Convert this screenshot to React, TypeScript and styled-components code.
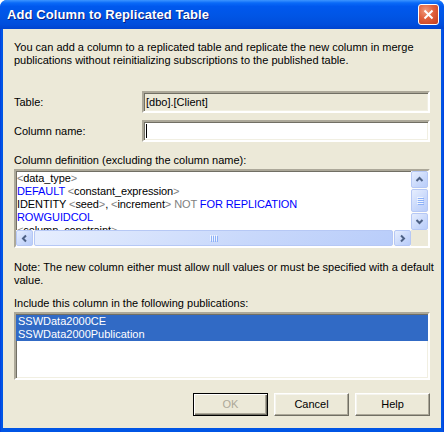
import React from "react";
import styled, { createGlobalStyle, css } from "styled-components";

const Global = createGlobalStyle`
  html, body { margin: 0; padding: 0; background: #ffffff; }
  body { font-family: "Liberation Sans", Arial, sans-serif; font-size: 11px; }
  * { box-sizing: border-box; }
`;

const Window = styled.div`
  width: 444px;
  height: 432px;
  display: flex;
  flex-direction: column;
  background: #0055e5;
  border-radius: 7px 7px 0 0;
  overflow: hidden;
`;

const TitleBar = styled.div`
  height: 29px;
  flex: none;
  display: flex;
  align-items: center;
  justify-content: space-between;
  padding: 0 5px 0 7px;
  background: linear-gradient(
    to bottom,
    #3d95ff 0%,
    #0a6af8 10%,
    #0058ee 22%,
    #0055e5 55%,
    #004ddc 85%,
    #0043cf 100%
  );
`;

const Title = styled.span`
  font-family: "Liberation Sans", Arial, sans-serif;
  font-weight: bold;
  font-size: 13px;
  color: #ffffff;
  text-shadow: 1px 1px 0 #0a1e7e;
  letter-spacing: 0.1px;
`;

const CloseButton = styled.div`
  width: 21px;
  height: 21px;
  border: 1px solid #ffffff;
  border-radius: 3px;
  background: radial-gradient(circle at 35% 30%, #f09a7c 0%, #e0603c 45%, #c23d1e 100%);
  display: flex;
  align-items: center;
  justify-content: center;
`;

const Frame = styled.div`
  flex: 1;
  display: flex;
  padding: 0 3px 4px 3px;
  background: linear-gradient(to right, #0831d9 0, #0055e5 1px, #0055e5 calc(100% - 1px), #0831d9 100%);
`;

const Body = styled.div`
  flex: 1;
  min-width: 0;
  background: #ece9d8;
  padding: 12px 11px 0 11px;
  display: flex;
  flex-direction: column;
  color: #000000;
  line-height: 13px;
`;

const Text = styled.div<{ $top?: number }>`
  margin-top: ${(p) => p.$top ?? 0}px;
  line-height: 13px;
  white-space: nowrap;
  min-width: 0;
`;

const FieldRow = styled.div<{ $top: number }>`
  margin-top: ${(p) => p.$top}px;
  display: grid;
  grid-template-columns: 128px 1fr;
  align-items: center;
`;

const sunken = css`
  border-style: solid;
  border-width: 2px;
  border-color: #aca899 #ffffff #ffffff #aca899;
  box-shadow: inset 1px 1px 0 #716f64, inset -1px -1px 0 #f1efe2;
`;

const Field = styled.div<{ $readOnly?: boolean }>`
  height: 22px;
  ${sunken};
  background: ${(p) => (p.$readOnly ? "#ece9d8" : "#ffffff")};
  padding: 0 0 0 2px;
  display: flex;
  align-items: center;
`;

const Caret = styled.span`
  width: 1px;
  height: 14px;
  background: #000000;
`;

const CodeBox = styled.div`
  margin-top: 2px;
  height: 79px;
  ${sunken};
  background: #ffffff;
  display: grid;
  grid-template-columns: minmax(0, 1fr) 17px;
  grid-template-rows: 1fr 16px;
`;

const CodeArea = styled.div`
  overflow: hidden;
  padding: 1px 0 0 1px;
  white-space: nowrap;
  line-height: 13px;
  letter-spacing: -0.1px;
`;

const Gray = styled.span`
  color: #808080;
`;
const Blue = styled.span`
  color: #0000ff;
`;

const VScroll = styled.div`
  display: flex;
  flex-direction: column;
  gap: 1px;
  background: #fdfdfa;
`;

const HScroll = styled.div`
  display: flex;
  flex-direction: row;
  gap: 1px;
  background: #fdfdfa;
`;

const Corner = styled.div`
  background: #ece9d8;
`;

const ScrollPart = styled.div<{ $size?: number; $grow?: boolean }>`
  ${(p) => (p.$grow ? "flex: 1;" : `flex: none; flex-basis: ${p.$size ?? 16}px;`)}
  border: 1px solid #b6c8f5;
  border-radius: 2px;
  background: linear-gradient(135deg, #e6eefe 0%, #c8d8fb 60%, #b9cdfa 100%);
  display: flex;
  align-items: center;
  justify-content: center;
`;

const Grip = styled.div<{ $vertical?: boolean }>`
  display: flex;
  flex-direction: ${(p) => (p.$vertical ? "column" : "row")};
  gap: 1px;
  & > span {
    display: block;
    background: #eef4fe;
    box-shadow: 1px 1px 0 #8cb0f8;
    ${(p) => (p.$vertical ? "width: 6px; height: 1px;" : "width: 1px; height: 6px;")}
  }
`;

const ListBox = styled.div`
  margin-top: 2px;
  height: 68px;
  ${sunken};
  background: #ffffff;
  padding-top: 1px;
`;

const ListItem = styled.div<{ $selected?: boolean }>`
  height: 13px;
  line-height: 13px;
  padding-left: 2px;
  background: ${(p) => (p.$selected ? "#316ac5" : "transparent")};
  color: ${(p) => (p.$selected ? "#ffffff" : "#000000")};
`;

const Buttons = styled.div`
  margin-top: 13px;
  display: flex;
  justify-content: flex-end;
  gap: 6px;
`;

const Button = styled.div<{ $default?: boolean; $disabled?: boolean }>`
  width: 75px;
  height: 23px;
  display: flex;
  align-items: center;
  justify-content: center;
  background: #ece9d8;
  color: ${(p) => (p.$disabled ? "#aca899" : "#000000")};
  ${(p) =>
    p.$default
      ? css`
          border: 1px solid #000000;
          box-shadow: inset 1px 1px 0 #ffffff, inset -1px -1px 0 #716f64, inset -2px -2px 0 #aca899;
        `
      : css`
          border-style: solid;
          border-width: 1px;
          border-color: #ffffff #716f64 #716f64 #ffffff;
          box-shadow: inset -1px -1px 0 #aca899, inset 1px 1px 0 #f5f4ee;
        `}
`;

const Chevron = ({ dir }: { dir: "up" | "down" | "left" | "right" }) => {
  const d =
    dir === "up"
      ? "M1.5 6 L4.5 3 L7.5 6"
      : dir === "down"
      ? "M1.5 3 L4.5 6 L7.5 3"
      : dir === "left"
      ? "M6 1.5 L3 4.5 L6 7.5"
      : "M3 1.5 L6 4.5 L3 7.5";
  return (
    <svg width="9" height="9" viewBox="0 0 9 9">
      <path d={d} fill="none" stroke="#4d6185" strokeWidth="2" />
    </svg>
  );
};

export default function App() {
  return (
    <>
      <Global />
      <Window>
        <TitleBar>
          <Title>Add Column to Replicated Table</Title>
          <CloseButton>
            <svg width="11" height="11" viewBox="0 0 11 11">
              <path d="M1.5 1.5 L9.5 9.5 M9.5 1.5 L1.5 9.5" stroke="#ffffff" strokeWidth="2" />
            </svg>
          </CloseButton>
        </TitleBar>
        <Frame>
          <Body>
            <Text>
              You can add a column to a replicated table and replicate the new column in merge
              <br />
              publications without reinitializing subscriptions to the published table.
            </Text>
            <FieldRow $top={24}>
              <span>Table:</span>
              <Field $readOnly>[dbo].[Client]</Field>
            </FieldRow>
            <FieldRow $top={7}>
              <span>Column name:</span>
              <Field>
                <Caret />
              </Field>
            </FieldRow>
            <Text $top={12}>Column definition (excluding the column name):</Text>
            <CodeBox>
              <CodeArea>
                <div>
                  <Gray>&lt;</Gray>data_type<Gray>&gt;</Gray>
                </div>
                <div>
                  <Blue>DEFAULT</Blue> <Gray>&lt;</Gray>constant_expression<Gray>&gt;</Gray>
                </div>
                <div>
                  IDENTITY <Gray>&lt;</Gray>seed<Gray>&gt;</Gray>, <Gray>&lt;</Gray>increment
                  <Gray>&gt;</Gray> <Gray>NOT</Gray> <Blue>FOR REPLICATION</Blue>
                </div>
                <div>
                  <Blue>ROWGUIDCOL</Blue>
                </div>
                <div>
                  <Gray>&lt;</Gray>column_constraint<Gray>&gt;</Gray>
                </div>
              </CodeArea>
              <VScroll>
                <ScrollPart $size={17}>
                  <Chevron dir="up" />
                </ScrollPart>
                <ScrollPart $grow>
                  <Grip $vertical>
                    <span />
                    <span />
                    <span />
                    <span />
                  </Grip>
                </ScrollPart>
                <ScrollPart $size={17}>
                  <Chevron dir="down" />
                </ScrollPart>
              </VScroll>
              <HScroll>
                <ScrollPart $size={17}>
                  <Chevron dir="left" />
                </ScrollPart>
                <ScrollPart $grow>
                  <Grip>
                    <span />
                    <span />
                    <span />
                    <span />
                  </Grip>
                </ScrollPart>
                <ScrollPart $size={17}>
                  <Chevron dir="right" />
                </ScrollPart>
              </HScroll>
              <Corner />
            </CodeBox>
            <Text $top={13}>
              Note: The new column either must allow null values or must be specified with a default
              <br />
              value.
            </Text>
            <Text $top={10}>Include this column in the following publications:</Text>
            <ListBox>
              <ListItem $selected>SSWData2000CE</ListItem>
              <ListItem $selected>SSWData2000Publication</ListItem>
            </ListBox>
            <Buttons>
              <Button $default $disabled>
                OK
              </Button>
              <Button>Cancel</Button>
              <Button>Help</Button>
            </Buttons>
          </Body>
        </Frame>
      </Window>
    </>
  );
}
